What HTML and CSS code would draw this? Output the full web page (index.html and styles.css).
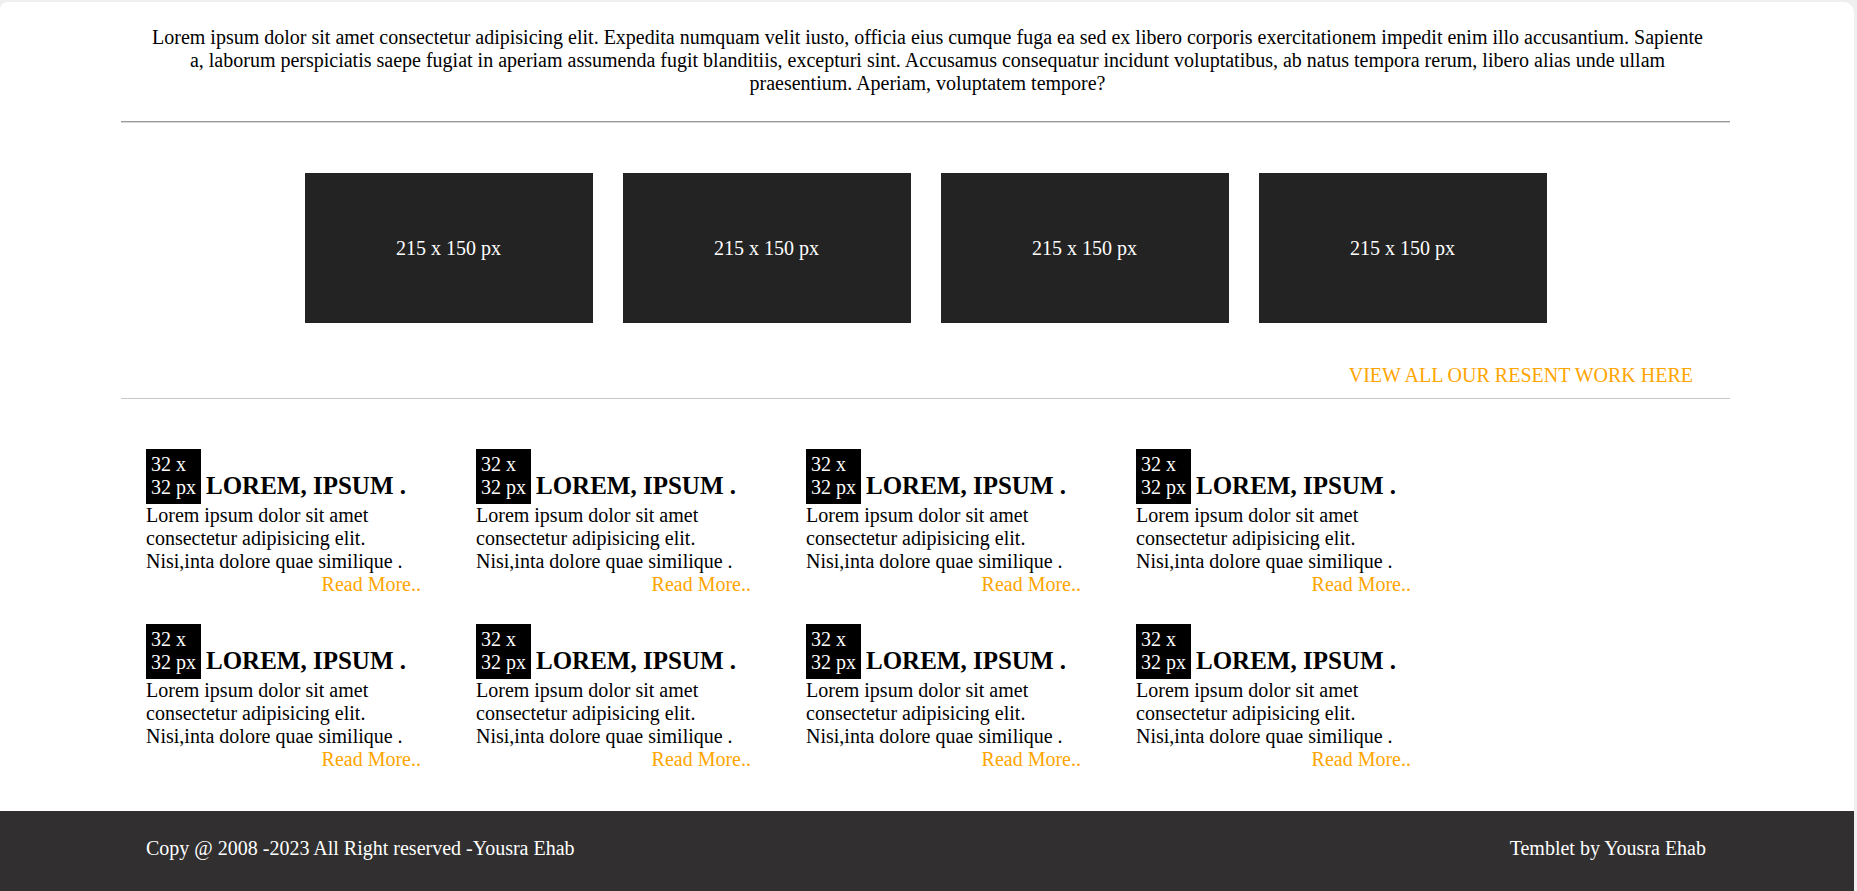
FILE: index.html
```html
<!DOCTYPE html>
<html lang="en">
<head>
<meta charset="utf-8">
<title>Template</title>
<link rel="stylesheet" href="styles.css">
</head>
<body>
<div class="page">
  <main class="container">
    <p class="intro">Lorem ipsum dolor sit amet consectetur adipisicing elit. Expedita numquam velit iusto, officia eius cumque fuga ea sed ex libero corporis exercitationem impedit enim illo accusantium. Sapiente a, laborum perspiciatis saepe fugiat in aperiam assumenda fugit blanditiis, excepturi sint. Accusamus consequatur incidunt voluptatibus, ab natus tempora rerum, libero alias unde ullam praesentium. Aperiam, voluptatem tempore?</p>
    <hr class="rule-dark">
    <section class="works">
      <div class="shot">215 x 150 px</div>
      <div class="shot">215 x 150 px</div>
      <div class="shot">215 x 150 px</div>
      <div class="shot">215 x 150 px</div>
    </section>
    <div class="view-all"><a href="#" class="view-link">VIEW ALL OUR RESENT WORK HERE</a></div>
    <hr class="rule-light">
    <section class="cards">
      <article class="card">
        <div class="card-head"><span class="icon">32 x 32 px</span> <span class="card-title">LOREM, IPSUM .</span></div>
        <p class="card-text">Lorem ipsum dolor sit amet consectetur adipisicing elit. Nisi,inta dolore quae similique .</p>
        <a href="#" class="more">Read More..</a>
      </article>
      <article class="card">
        <div class="card-head"><span class="icon">32 x 32 px</span> <span class="card-title">LOREM, IPSUM .</span></div>
        <p class="card-text">Lorem ipsum dolor sit amet consectetur adipisicing elit. Nisi,inta dolore quae similique .</p>
        <a href="#" class="more">Read More..</a>
      </article>
      <article class="card">
        <div class="card-head"><span class="icon">32 x 32 px</span> <span class="card-title">LOREM, IPSUM .</span></div>
        <p class="card-text">Lorem ipsum dolor sit amet consectetur adipisicing elit. Nisi,inta dolore quae similique .</p>
        <a href="#" class="more">Read More..</a>
      </article>
      <article class="card">
        <div class="card-head"><span class="icon">32 x 32 px</span> <span class="card-title">LOREM, IPSUM .</span></div>
        <p class="card-text">Lorem ipsum dolor sit amet consectetur adipisicing elit. Nisi,inta dolore quae similique .</p>
        <a href="#" class="more">Read More..</a>
      </article>
      <article class="card">
        <div class="card-head"><span class="icon">32 x 32 px</span> <span class="card-title">LOREM, IPSUM .</span></div>
        <p class="card-text">Lorem ipsum dolor sit amet consectetur adipisicing elit. Nisi,inta dolore quae similique .</p>
        <a href="#" class="more">Read More..</a>
      </article>
      <article class="card">
        <div class="card-head"><span class="icon">32 x 32 px</span> <span class="card-title">LOREM, IPSUM .</span></div>
        <p class="card-text">Lorem ipsum dolor sit amet consectetur adipisicing elit. Nisi,inta dolore quae similique .</p>
        <a href="#" class="more">Read More..</a>
      </article>
      <article class="card">
        <div class="card-head"><span class="icon">32 x 32 px</span> <span class="card-title">LOREM, IPSUM .</span></div>
        <p class="card-text">Lorem ipsum dolor sit amet consectetur adipisicing elit. Nisi,inta dolore quae similique .</p>
        <a href="#" class="more">Read More..</a>
      </article>
      <article class="card">
        <div class="card-head"><span class="icon">32 x 32 px</span> <span class="card-title">LOREM, IPSUM .</span></div>
        <p class="card-text">Lorem ipsum dolor sit amet consectetur adipisicing elit. Nisi,inta dolore quae similique .</p>
        <a href="#" class="more">Read More..</a>
      </article>
    </section>
  </main>
  <footer class="footer">
    <span>Copy @ 2008 -2023 All Right reserved -Yousra Ehab</span>
    <span>Temblet by Yousra Ehab</span>
  </footer>
</div>
</body>
</html>
```
FILE: styles.css
```css
html, body {
  margin: 0;
  padding: 0;
}

body {
  background: #efefef;
  font-family: "Liberation Serif", "Times New Roman", serif;
  font-size: 20px;
  color: #000;
}

.page {
  background: #fff;
  margin: 2px 3px 0 0;
  border-radius: 8px 10px 0 0;
  min-height: 889px;
  display: flex;
  flex-direction: column;
}

.container {
  margin: 0 124px 0 121px;
  padding-top: 24px;
}

.intro {
  margin: 0;
  padding: 0 22px 0 26px;
  text-align: center;
  line-height: 23px;
}

.rule-dark {
  margin: 26px 0 0;
  border: 0;
  border-top: 1px solid #9a9a9a;
  border-bottom: 1px solid #d8d8d8;
  height: 0;
}

.works {
  display: flex;
  justify-content: center;
  gap: 30px;
  margin-top: 50px;
}

.shot {
  width: 288px;
  height: 150px;
  background: #232323;
  color: #fff;
  display: flex;
  align-items: center;
  justify-content: center;
}

.view-all {
  margin-top: 41px;
  text-align: right;
  padding-right: 37px;
  line-height: 23px;
}

.view-link {
  color: #ffa500;
  text-decoration: none;
}

.rule-light {
  margin: 11px 0 0;
  border: 0;
  border-top: 1px solid #c8c8c8;
  height: 0;
}

.cards {
  display: grid;
  grid-template-columns: repeat(4, 274px);
  column-gap: 56px;
  row-gap: 28px;
  padding: 50px 25px 39px;
}

.card {
  display: flex;
  flex-direction: column;
  line-height: 23px;
}

.card-head {
  line-height: 23px;
}

.icon {
  display: inline-block;
  width: 46px;
  padding: 4px 4px 5px 5px;
  background: #000;
  color: #fff;
}

.card-title {
  font-size: 25px;
  font-weight: bold;
}

.card-text {
  margin: 0;
}

.more {
  align-self: flex-end;
  margin-right: -1px;
  color: #ffa500;
  text-decoration: none;
}

.footer {
  margin-top: auto;
  background: #312f30;
  color: #fff;
  display: flex;
  justify-content: space-between;
  padding: 26px 148px 31px 146px;
  line-height: 23px;
}
```
